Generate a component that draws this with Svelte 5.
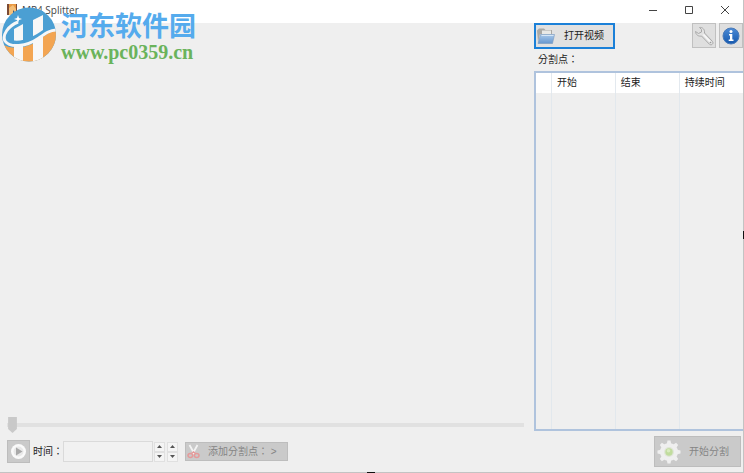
<script lang="ts">
  let position = 0;
  let time = '';
  const columns = ['开始', '结束', '持续时间'];
  const spinners = ['秒', '帧'];
  const teeth = [0, 45, 90, 135, 180, 225, 270, 315];
</script>

<div class="window">
  <header class="titlebar">
    <svg class="app-icon" width="13" height="14" viewBox="0 0 13 14" aria-hidden="true">
      <rect x="1" y="1" width="10" height="11" fill="#7b4b35" />
      <rect x="3" y="1" width="7" height="11" fill="#e99a45" />
      <path d="M3 5l4-3 3 4v6H3z" fill="#f4c07a" />
      <path d="M7 7l5 6H7z" fill="#3a5678" />
    </svg>
    <h1>MP4 Splitter</h1>
    <div class="window-buttons">
      <button aria-label="最小化">
        <svg width="10" height="10" viewBox="0 0 10 10"><path d="M1 5.5h8" /></svg>
      </button>
      <button aria-label="最大化">
        <svg width="10" height="10" viewBox="0 0 10 10"><path d="M1.5 1.5h7v7h-7z" /></svg>
      </button>
      <button aria-label="关闭">
        <svg width="10" height="10" viewBox="0 0 10 10"><path d="M1 1l8 8M9 1l-8 8" /></svg>
      </button>
    </div>
  </header>

  <main>
    <section class="player">
      <div class="preview"></div>
      <input class="seek" type="range" min="0" max="100" bind:value={position} aria-label="播放位置" />
      <div class="controls">
        <button class="play" aria-label="播放" disabled>
          <svg width="17" height="17" viewBox="0 0 17 17">
            <circle cx="8.5" cy="8.5" r="7.5" fill="#fafafa" />
            <circle cx="8.5" cy="8.5" r="5" fill="#e9e9e9" />
            <path d="M6 4.500l6.500 4-6.500 4z" fill="#a9a9a9" />
          </svg>
        </button>
        <label for="time">时间：</label>
        <input id="time" class="time" type="text" bind:value={time} disabled />
        {#each spinners as name}
          <div class="spinner">
            <button aria-label="{name}增加">
              <svg width="5" height="3" viewBox="0 0 5 3"><path d="M0 3l2.500-3L5 3z" /></svg>
            </button>
            <button aria-label="{name}减少">
              <svg width="5" height="3" viewBox="0 0 5 3"><path d="M0 0h5L2.500 3z" /></svg>
            </button>
          </div>
        {/each}
        <button class="add" disabled>
          <svg width="13" height="15" viewBox="0 0 13 15" fill="none">
            <path d="M2.500 1l5 9M10.500 1l-5 9" stroke="#f3f3f3" stroke-width="1.800" />
            <ellipse cx="3.300" cy="11.500" rx="2.300" ry="2" stroke="#e59a9a" stroke-width="1.500" />
            <ellipse cx="9.700" cy="11.500" rx="2.300" ry="2" stroke="#e59a9a" stroke-width="1.500" />
            <path d="M4.500 9.500l2-1.500 2 1.500" stroke="#e59a9a" stroke-width="1.500" />
          </svg>
          <span>添加分割点： &gt;</span>
        </button>
      </div>
    </section>

    <aside>
      <div class="toolbar">
        <button class="open">
          <svg width="18" height="18" viewBox="0 0 18 18">
            <defs>
              <linearGradient id="folder" x1="0" y1="0" x2="0" y2="1">
                <stop offset="0" stop-color="#a9c9ea" />
                <stop offset="1" stop-color="#6797cf" />
              </linearGradient>
            </defs>
            <path d="M0 3.500L2 1.500h5l1.500 1.500H15v4H3L1 15z" fill="#aaa9a5" />
            <path d="M5 3.500h9v4H5z" fill="#e9e9e6" />
            <path d="M3.500 7.500h14l-2 9H1z" fill="url(#folder)" stroke="#7899bd" stroke-width=".6" />
            <path d="M4.500 8.500h12" stroke="#d5e6f7" />
          </svg>
          <span>打开视频</span>
        </button>
        <button class="tool settings" aria-label="设置">
          <svg width="20" height="20" viewBox="0 0 20 20">
            <path
              d="M5.500 1.500C8.500 1 11 3.500 10.500 7l8 8.500c1.500 2-1 4.300-3 2.800L7.500 10C4.500 10.800 1.500 8.500 1.500 5.500L4.500 7.500 7.500 6 7.500 3.500z"
              fill="#e3e3e3"
              stroke="#a8a8a8"
            />
            <path d="M9.500 8.500l6.500 7" stroke="#f8f8f8" stroke-width="1.500" />
            <circle cx="16.500" cy="16.500" r=".8" fill="#999" />
          </svg>
        </button>
        <button class="tool" aria-label="关于">
          <svg width="18" height="18" viewBox="0 0 18 18">
            <defs>
              <linearGradient id="info" x1="0" y1="0" x2="0" y2="1">
                <stop offset="0" stop-color="#4c8bd6" />
                <stop offset="1" stop-color="#1558ad" />
              </linearGradient>
            </defs>
            <circle cx="9" cy="9" r="8" fill="url(#info)" stroke="#4a7ab8" />
            <circle cx="9" cy="4.500" r="1.500" fill="#fff" />
            <path d="M7 7h3.300v5.500h1.200V14H6.700v-1.500H8v-4H7z" fill="#fff" />
          </svg>
        </button>
      </div>

      <p class="caption">分割点：</p>

      <div class="points">
        <table>
          <thead>
            <tr>
              <th class="marker"></th>
              {#each columns as column}
                <th>{column}</th>
              {/each}
            </tr>
          </thead>
          <tbody>
            <tr>
              <td></td>
              {#each columns as _}
                <td></td>
              {/each}
            </tr>
          </tbody>
        </table>
      </div>

      <button class="start" disabled>
        <svg width="24" height="24" viewBox="0 0 24 24">
          <g fill="#efefef">
            {#each teeth as angle}
              <path d="M9.500 5l1-4.500h3l1 4.500z" transform="rotate({angle} 12 12)" />
            {/each}
            <circle cx="12" cy="12" r="9" />
          </g>
          <circle cx="12" cy="12" r="5" fill="#e0e5d9" />
          <circle cx="12" cy="12" r="3.700" fill="#c0dc9d" />
          <circle cx="11.500" cy="10.800" r="1.800" fill="#d8ebbf" />
        </svg>
        <span>开始分割</span>
      </button>
    </aside>
  </main>

  <div class="watermark">
    <svg width="57" height="57" viewBox="0 0 57 57" aria-hidden="true">
      <defs>
        <clipPath id="disc"><circle cx="29" cy="28.500" r="27" /></clipPath>
      </defs>
      <g clip-path="url(#disc)">
        <path d="M0 0h57v57H0z" fill="#4b9fd3" />
        <path d="M0 37c12 8 28 5 39-3 7-5 11-9 18-9v32H0z" fill="#f3a552" />
        <path d="M14 23l9-5v39h-9zM33 14l10-5v48H33z" fill="#f7f7f7" />
        <!-- crossbar between the pillars -->
        <path d="M8 33c12 5 25-2 35-9 5-3 9-4 13-3-7 3-12 9-19 13-10 6-22 8-29-1z" fill="#4b9fd3" />
        <path d="M18 16C8 20 2 29 5 35c5 7 21 6 34-3 7-5 11-8 18-8" fill="none" stroke="#f7f7f7" stroke-width="3" />
      </g>
      <path d="M18 9l1 3 3 1-3 1-1 3-1-3-3-1 3-1z" fill="#fff" />
    </svg>
    <div>
      <strong>河东软件园</strong>
      <span>www.pc0359.cn</span>
    </div>
  </div>
  <i class="grip right"></i>
  <i class="grip bottom"></i>
</div>

<style>
  :global(body) {
    margin: 0;
  }

  .window {
    position: relative;
    box-sizing: border-box;
    display: flex;
    flex-direction: column;
    min-height: 100vh;
    border-right: 1px solid #c3c3c3;
    border-bottom: 1px solid #c3c3c3;
    background: #efefef;
    color: #222;
    font: 10px/14px "Liberation Sans", "Noto Sans CJK SC", sans-serif;
  }

  button,
  input {
    box-sizing: border-box;
    margin: 0;
    padding: 0;
    font: inherit;
    color: inherit;
  }

  svg {
    display: block;
    flex: none;
  }

  .titlebar {
    display: flex;
    align-items: center;
    height: 23px;
    padding-left: 6px;
    background: #fff;
  }

  .app-icon {
    margin-bottom: 3px;
  }

  h1 {
    flex: 1;
    margin: 0 0 3px 3px;
    font: 10px/16px "Open Sans", sans-serif;
    color: #444;
  }

  .window-buttons {
    display: flex;
    margin-bottom: 3px;
  }

  .window-buttons button {
    display: grid;
    place-items: center;
    width: 36px;
    height: 20px;
    border: 0;
    background: none;
  }

  .window-buttons path {
    fill: none;
    stroke: #444;
  }

  main {
    flex: 1;
    display: grid;
    grid-template-columns: 1fr 209px;
  }

  .player {
    display: flex;
    flex-direction: column;
    padding: 0 10px 9px 7px;
  }

  .preview {
    flex: 1;
  }

  .seek {
    appearance: none;
    width: 100%;
    height: 16px;
    margin-bottom: 7px;
    background: linear-gradient(#e1e1e1, #e1e1e1) center / 100% 4px no-repeat;
  }

  .seek::-webkit-slider-thumb {
    appearance: none;
    width: 11px;
    height: 16px;
    background: #c9c9c9;
    clip-path: polygon(10% 0, 90% 0, 90% 75%, 50% 100%, 10% 75%);
  }

  .controls {
    display: flex;
    align-items: center;
    height: 23px;
  }

  .play {
    display: grid;
    place-items: center;
    width: 23px;
    height: 23px;
    margin-right: 3px;
    border: 1px solid #bdbdbd;
    background: #cacaca;
  }

  /* the TC face centres the full-width colon */
  label,
  .caption,
  .add span {
    font-family: "Liberation Sans", "Noto Sans CJK TC", sans-serif;
  }

  label {
    width: 30px;
  }

  .time {
    width: 90px;
    height: 21px;
    margin-right: 1px;
    border: 1px solid #dadada;
    background: #f1f1f1;
  }

  .spinner {
    display: flex;
    flex-direction: column;
    width: 11px;
    height: 20px;
    margin-right: 2px;
  }

  .spinner button {
    flex: 1;
    display: grid;
    place-items: center;
    border: 1px solid #e0e0e0;
    background: #f4f4f4;
  }

  .spinner path {
    fill: #555;
  }

  .add {
    display: flex;
    align-items: center;
    gap: 8px;
    width: 103px;
    height: 19px;
    margin-left: 5px;
    padding-left: 1px;
    border: 1px solid #bdbdbd;
    background: #cacaca;
    color: #858585;
    white-space: nowrap;
  }

  aside {
    display: flex;
    flex-direction: column;
    padding-bottom: 5px;
  }

  .toolbar {
    display: flex;
    height: 26px;
  }

  .open {
    display: flex;
    align-items: center;
    gap: 9px;
    width: 81px;
    padding-left: 1px;
    border: 2px solid #1b80d8;
    background: #e1e1e1;
  }

  .tool {
    display: grid;
    place-items: center;
    width: 24px;
    height: 25px;
    border: 1px solid #c0c0c0;
    background: #dfdfdf;
  }

  .settings {
    margin: 0 3px 0 auto;
  }

  .caption {
    margin: 4px 0 4px 4px;
  }

  .points {
    flex: 1;
    display: flex;
    border: 2px solid #afc3dd;
    border-right: 0;
  }

  table {
    width: 100%;
    border-collapse: collapse;
    table-layout: fixed;
  }

  th {
    height: 20px;
    padding: 0 0 0 5px;
    border-right: 1px solid #e3e9ef;
    background: #fff;
    font-weight: normal;
    text-align: left;
  }

  .marker {
    width: 15px;
    padding: 0;
  }

  td {
    height: 100%;
    padding: 0;
    border-right: 1px solid #e2e8ed;
  }

  th:last-child,
  td:last-child {
    border-right: 0;
  }

  .start {
    display: flex;
    align-items: center;
    align-self: flex-end;
    gap: 8px;
    width: 87px;
    height: 31px;
    margin: 5px 2px 0 0;
    padding-left: 2px;
    border: 1px solid #bdbdbd;
    background: #cacaca;
    color: #858585;
  }

  .watermark {
    position: absolute;
    top: 6px;
    left: 0;
    display: flex;
    gap: 4px;
    pointer-events: none;
  }

  .watermark div {
    display: flex;
    flex-direction: column;
    padding-top: 4px;
  }

  .watermark strong {
    font: bold 27px/30px "Noto Sans CJK SC", sans-serif;
    color: #55abed;
  }

  .watermark span {
    font: bold 20px/24px "Liberation Serif", serif;
    color: #6ab35b;
  }

  .grip {
    position: absolute;
    background: #111;
  }

  .right {
    top: 231px;
    right: -1px;
    width: 1px;
    height: 8px;
  }

  .bottom {
    bottom: -1px;
    left: 367px;
    width: 8px;
    height: 1px;
  }
</style>
